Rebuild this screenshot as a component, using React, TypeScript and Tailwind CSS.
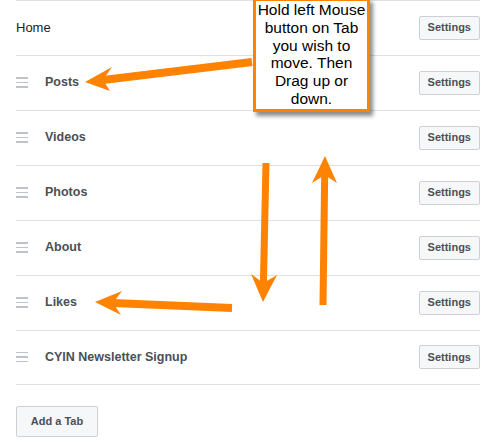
const tabs = ['Posts', 'Videos', 'Photos', 'About', 'Likes', 'CYIN Newsletter Signup']

function DragHandle() {
  return (
    <div className="flex w-3 flex-col gap-[3px]">
      <span className="h-[1.5px] w-3 bg-[#bec3c9]" />
      <span className="h-[1.5px] w-3 bg-[#bec3c9]" />
      <span className="h-[1.5px] w-3 bg-[#bec3c9]" />
    </div>
  )
}

function SettingsButton() {
  return (
    <button className="h-6 rounded-[2px] border border-[#ced0d4] bg-[#f6f7f9] px-[8px] text-[11px] font-bold text-[#4b4f56]">
      Settings
    </button>
  )
}

function Arrows() {
  const orange = '#ff8300'
  return (
    <svg className="pointer-events-none absolute left-0 top-0" width="498" height="444" viewBox="0 0 498 444">
      {/* to Posts */}
      <line x1="252" y1="62" x2="103" y2="80" stroke={orange} strokeWidth="8" />
      <polygon points="85,82 112,67 103,80 110,91" fill={orange} />
      {/* to Likes */}
      <line x1="232" y1="308" x2="113" y2="303" stroke={orange} strokeWidth="8" />
      <polygon points="95,302 122,291 113,303 121,315" fill={orange} />
      {/* down */}
      <line x1="266" y1="163" x2="263.4" y2="284" stroke={orange} strokeWidth="7" />
      <polygon points="263,302 251,274 263.4,283 277,275" fill={orange} />
      {/* up */}
      <line x1="323" y1="305" x2="324.7" y2="174" stroke={orange} strokeWidth="7" />
      <polygon points="325,156 337,183 324.7,175 312,183" fill={orange} />
    </svg>
  )
}

export default function App() {
  return (
    <div className="relative h-[444px] w-[498px] overflow-hidden bg-white font-['Liberation_Sans',Arial,Helvetica,sans-serif]">
      <div className="w-[464px] pl-4 box-content">
        <div className="flex h-[55px] items-center justify-between border-t border-[#dddfe2] pb-[1px]">
          <span className="text-[13px] text-[#1d2129]">Home</span>
          <SettingsButton />
        </div>
        {tabs.map((tab, i) => (
          <div
            key={tab}
            className={`flex h-[55px] items-center justify-between border-t border-[#dddfe2] pb-[1px] ${
              i === tabs.length - 1 ? 'border-b' : ''
            }`}
          >
            <div className="flex items-center gap-[17px]">
              <DragHandle />
              <span className="text-[12.5px] font-bold text-[#4b4f56]">{tab}</span>
            </div>
            <SettingsButton />
          </div>
        ))}
        <button className="mt-[21px] h-[31px] w-[82px] rounded-[2px] border border-[#ced0d4] bg-[#f6f7f9] text-[11px] font-bold text-[#4b4f56]">
          Add a Tab
        </button>
      </div>

      <Arrows />

      <div className="absolute left-[253px] top-[-2px] w-[117px] border-[3px] border-[#ff8300] bg-white pb-[1px] text-center text-[15.5px] leading-[17.8px] text-black shadow-[3px_4px_4px_rgba(0,0,0,0.45)]">
        Hold left Mouse button on Tab you wish to move. Then Drag up or down.
      </div>
    </div>
  )
}
